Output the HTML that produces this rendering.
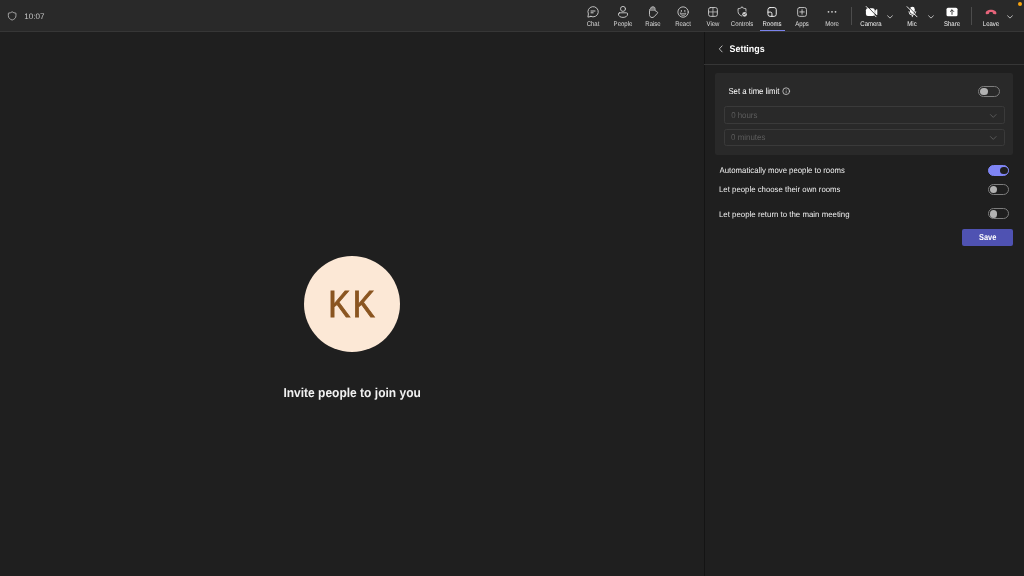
<!DOCTYPE html>
<html lang="en">
<head>
<meta charset="utf-8">
<title>Meeting</title>
<style>
*{box-sizing:border-box;margin:0;padding:0}
html,body{width:1024px;height:576px;overflow:hidden;background:#1f1f1f}
body{text-rendering:geometricPrecision;position:relative;font-family:"Liberation Sans",sans-serif;color:#fff}
.abs{position:absolute}
.t,.tb .l{will-change:opacity}
.t{position:absolute;white-space:nowrap;transform-origin:0 50%;line-height:1}
#hdr{position:absolute;left:0;top:0;width:1024px;height:32px;background:#292929;border-bottom:1px solid #363636}
.tb{position:absolute;top:0;height:31px;width:30px}
.tb svg{position:absolute;left:50%;top:6px;width:12px;height:12px;margin-left:-6px;overflow:visible}
.tb .l{position:absolute;left:-10px;right:-10px;top:20.6px;text-align:center;font-size:6.8px;line-height:8px;color:#dcdcdc;white-space:nowrap;transform:scaleX(.885)}
.tb.w .l{color:#f2f2f2}
.vdiv{position:absolute;top:7.4px;width:1px;height:17.3px;background:#4c4c4c}
#panel{position:absolute;left:704px;top:32px;width:320px;height:544px;background:#1f1f1f;border-left:1px solid #141414}
#phead{position:absolute;left:-1px;top:0;width:320px;height:33px;border-bottom:1px solid #363636}
#card{position:absolute;left:715px;top:73px;width:298px;height:82px;background:#292929;border-radius:2px}
.sel{position:absolute;left:724px;width:280.5px;height:17.6px;border:1px solid #3a3a3a;border-radius:2.5px;background:#292929}
.tog{position:absolute;width:21.5px;height:11px;border-radius:6px;border:1px solid #7c7c7c}
.tog i{position:absolute;left:1.3px;top:0.7px;width:7.6px;height:7.6px;border-radius:50%;background:#b2b2b2}
.tog.on{background:#7f85f5;border-color:#7f85f5}
.tog.on i{left:auto;right:0.3px;background:#1f1f1f}
#save{position:absolute;left:962px;top:229px;width:51px;height:17px;background:#4f52b2;border-radius:2px}
#avatar{position:absolute;left:304px;top:256px;width:96px;height:96px;border-radius:50%;background:#fce8d6}
</style>
</head>
<body>
<div id="hdr">
<svg class="abs" style="left:6px;top:10px;width:12px;height:12px;overflow:visible" viewBox="0 0 12 12" fill="none" stroke="#a8a8a8" stroke-width="0.95" stroke-linejoin="round"><path d="M6.15 1.8C7.2 2.6 8.5 3.1 9.95 3.2V5.7C9.95 7.9 8.6 9.2 6.15 10.05C3.7 9.2 2.35 7.9 2.35 5.7V3.2C3.8 3.1 5.1 2.6 6.15 1.8Z"/></svg>
<div class="tb " style="left:578.4px"><svg viewBox="0 0 12 12" fill="none" stroke="#cfcfcf" stroke-width="0.9" stroke-linecap="round" stroke-linejoin="round"><path d="M3.92 10.47L0.9 11.1L1.43 7.98A5.15 5.15 0 1 1 3.92 10.47Z"/><path d="M4 5h4M4 6.8h2.2" stroke-width="1"/></svg><span class="l">Chat</span></div>
<div class="tb " style="left:608.1px"><svg viewBox="0 0 12 12" fill="none" stroke="#cfcfcf" stroke-width="0.9" stroke-linecap="round" stroke-linejoin="round"><circle cx="6" cy="2.9" r="2.5"/><path d="M2.6 6.8h6.8a1.2 1.2 0 0 1 1.2 1.2c0 2.2-2 3.4-4.6 3.4S1.4 10.2 1.4 8a1.2 1.2 0 0 1 1.2-1.2z"/></svg><span class="l">People</span></div>
<div class="tb " style="left:638.4px"><svg viewBox="0 0 12 12" fill="none" stroke="#cfcfcf" stroke-width="0.9" stroke-linecap="round" stroke-linejoin="round"><g transform="translate(0.4 0)"><path d="M2.1 4.2C2.1 3.2 2.7 2.6 3.4 2.5V2.3C3.4 1.3 4.3 0.8 5.5 0.8C6.8 0.8 7.6 1.5 7.6 2.6V4.6L9.5 5.6C10.3 6 10.4 6.7 9.9 7.3L6.9 10.6C6.2 11.3 5.4 11.5 4.6 11.5C3.1 11.5 2.1 10.4 2.1 8.8Z"/><path d="M2.3 4.3C2.3 3.3 2.9 2.8 3.5 2.7V2.4C3.5 1.5 4.4 1 5.5 1S7.4 1.6 7.4 2.6V4.9H2.3Z" fill="#cfcfcf" stroke="none" opacity="0.5"/></g></svg><span class="l">Raise</span></div>
<div class="tb " style="left:667.8px"><svg viewBox="0 0 12 12" fill="none" stroke="#cfcfcf" stroke-width="0.9" stroke-linecap="round" stroke-linejoin="round"><circle cx="6.1" cy="6.05" r="5.2"/><ellipse cx="4.35" cy="4.9" rx="0.6" ry="0.9" fill="#cfcfcf" stroke="none"/><ellipse cx="7.85" cy="4.9" rx="0.6" ry="0.9" fill="#cfcfcf" stroke="none"/><path d="M3.3 7.1Q6.1 8 8.9 7.1C8.7 8.9 7.5 9.7 6.1 9.7S3.5 8.9 3.3 7.1Z" fill="#cfcfcf" fill-opacity="0.35" stroke-width="0.7" stroke-opacity="0.75"/></svg><span class="l">React</span></div>
<div class="tb " style="left:697.7px"><svg viewBox="0 0 12 12" fill="none" stroke="#cfcfcf" stroke-width="0.9" stroke-linecap="round" stroke-linejoin="round"><rect x="1.55" y="1.55" width="8.8" height="8.8" rx="1.9"/><path d="M5.95 1.55v8.8M1.55 5.95h8.8" opacity="0.8"/></svg><span class="l">View</span></div>
<div class="tb " style="left:727.4px"><svg viewBox="0 0 12 12" fill="none" stroke="#cfcfcf" stroke-width="0.9" stroke-linecap="round" stroke-linejoin="round"><path d="M6 1.25C7.1 2.1 8.4 2.6 9.95 2.7V5.4C9.95 7.8 8.5 9.2 6 10.05C3.5 9.2 2.05 7.8 2.05 5.4V2.7C3.6 2.6 4.9 2.1 6 1.25Z"/><circle cx="8.6" cy="8.3" r="3" fill="#292929" stroke="none"/><circle cx="8.6" cy="8.3" r="2.35" fill="#cfcfcf" stroke="none"/><path d="M7.6 8.3l0.7 0.7l1.3-1.4" stroke="#292929" stroke-width="0.7"/></svg><span class="l">Controls</span></div>
<div class="tb w" style="left:757.4px"><svg viewBox="0 0 12 12" fill="none" stroke="#fff" stroke-width="0.9" stroke-linecap="round" stroke-linejoin="round"><rect x="1.95" y="1.55" width="8.3" height="8.8" rx="2.1"/><path d="M1.95 6.1h2.4a1.6 1.6 0 0 1 1.6 1.6v2.65"/></svg><span class="l">Rooms</span></div>
<div class="tb " style="left:787.3px"><svg viewBox="0 0 12 12" fill="none" stroke="#cfcfcf" stroke-width="0.9" stroke-linecap="round" stroke-linejoin="round"><rect x="1.65" y="1.55" width="8.8" height="8.8" rx="1.9"/><path d="M6.05 3.7v4.5M3.8 5.95h4.5"/></svg><span class="l">Apps</span></div>
<div class="tb " style="left:817.1px"><svg viewBox="0 0 12 12" fill="none" stroke="#cfcfcf" stroke-width="0.9" stroke-linecap="round" stroke-linejoin="round"><circle cx="2.5" cy="5.8" r="0.9" fill="#cfcfcf" stroke="none"/><circle cx="6" cy="5.8" r="0.9" fill="#cfcfcf" stroke="none"/><circle cx="9.5" cy="5.8" r="0.9" fill="#cfcfcf" stroke="none"/></svg><span class="l">More</span></div>
<div class="tb w" style="left:856.0px"><svg viewBox="0 0 12 12" fill="none" stroke="#fff" stroke-width="0.9" stroke-linecap="round" stroke-linejoin="round"><rect x="0.9" y="2.3" width="8.8" height="7.8" rx="2" fill="#fff" stroke="none"/><path d="M10.2 5L12 3.4V9L10.2 7.4Z" fill="#fff" stroke="#fff" stroke-width="0.6"/><path d="M1.9 -0.1L11.8 10.2" stroke="#292929" stroke-width="0.9"/><path d="M1.2 0.5L11.1 10.8" stroke="#fff" stroke-width="0.9"/></svg><span class="l">Camera</span></div>
<div class="tb w" style="left:896.5px"><svg viewBox="0 0 12 12" fill="none" stroke="#fff" stroke-width="0.9" stroke-linecap="round" stroke-linejoin="round"><rect x="4" y="0.8" width="4.7" height="7.1" rx="2.35" fill="#fff" stroke="none"/><path d="M2.9 5.7a3.45 3.45 0 0 0 6.9 0M6.35 9.2v1.5" stroke="#fff" stroke-width="0.85"/><path d="M1.8 0.1L11.7 10.2" stroke="#292929" stroke-width="0.9"/><path d="M1.1 0.7L11 10.8" stroke="#fff" stroke-width="0.9"/></svg><span class="l">Mic</span></div>
<div class="tb w" style="left:937.2px"><svg viewBox="0 0 12 12" fill="none" stroke="#fff" stroke-width="0.9" stroke-linecap="round" stroke-linejoin="round"><rect x="0.5" y="1.7" width="11" height="8.6" rx="1.5" fill="#fff" stroke="none"/><path d="M6 4v4.4M4.3 5.5L6 3.8L7.7 5.5" stroke="#292929" stroke-width="0.9"/></svg><span class="l">Share</span></div>
<div class="tb w" style="left:976.1px"><svg viewBox="0 0 12 12" fill="none" stroke="#fff" stroke-width="0.9" stroke-linecap="round" stroke-linejoin="round"><path d="M0.7 7.2C0.7 5 3.2 3.8 6 3.8S11.4 5 11.4 7.2C11.4 7.9 10.9 8.3 10.3 8.2L8.6 7.9C8 7.8 7.7 7.3 7.7 6.8V6.2C6.6 5.8 5.4 5.8 4.3 6.2V6.8C4.3 7.3 4 7.8 3.4 7.9L1.7 8.2C1.1 8.3 0.7 7.9 0.7 7.2Z" fill="#e6647a" stroke="none"/></svg><span class="l">Leave</span></div>
<svg class="abs" style="left:887.1px;top:14.5px;width:6px;height:4px;overflow:visible" viewBox="0 0 6 4" fill="none" stroke="#c0c0c0" stroke-width="0.95" stroke-linecap="round" stroke-linejoin="round"><path d="M0.6 0.8L3 3.1L5.4 0.8"/></svg>
<svg class="abs" style="left:927.6px;top:14.5px;width:6px;height:4px;overflow:visible" viewBox="0 0 6 4" fill="none" stroke="#c0c0c0" stroke-width="0.95" stroke-linecap="round" stroke-linejoin="round"><path d="M0.6 0.8L3 3.1L5.4 0.8"/></svg>
<svg class="abs" style="left:1007.1px;top:14.6px;width:6px;height:4px;overflow:visible" viewBox="0 0 6 4" fill="none" stroke="#c0c0c0" stroke-width="0.95" stroke-linecap="round" stroke-linejoin="round"><path d="M0.6 0.8L3 3.1L5.4 0.8"/></svg>
<div class="vdiv" style="left:851px"></div><div class="vdiv" style="left:971px"></div>
<div class="abs" style="left:760px;top:29.5px;width:24.5px;height:1.5px;background:#7b83eb"></div>
<div class="abs" style="left:1017.7px;top:2.2px;width:4.1px;height:4.1px;border-radius:50%;background:#f9a30e"></div>
</div>
<div id="panel"><div id="phead"></div></div>
<div id="card"></div>
<div class="sel" style="top:106.1px"></div>
<div class="sel" style="top:128.8px"></div>
<div class="tog" style="left:978.2px;top:86.1px"><i></i></div>
<div class="tog on" style="left:987.5px;top:165px"><i></i></div>
<div class="tog" style="left:987.5px;top:184px"><i></i></div>
<div class="tog" style="left:987.5px;top:208.3px"><i></i></div>
<svg class="abs" style="left:717px;top:44px;width:8px;height:10px;overflow:visible" viewBox="0 0 8 10" fill="none" stroke="#c8c8c8" stroke-width="0.9" stroke-linecap="round" stroke-linejoin="round"><path d="M5.1 1.9L2.3 4.9L5.1 7.9"/></svg>
<svg class="abs" style="left:782px;top:87px;width:8.4px;height:8.4px;overflow:visible" viewBox="0 0 8.4 8.4" fill="none" stroke="#d0d0d0" stroke-width="0.8" stroke-linecap="round"><circle cx="4.2" cy="4.2" r="3.4"/><path d="M4.2 3.9v2" stroke-width="0.7" opacity="0.85"/><circle cx="4.2" cy="2.6" r="0.42" fill="#d0d0d0" stroke="none" opacity="0.85"/></svg>
<svg class="abs" style="left:990px;top:113.6px;width:6.5px;height:4px;overflow:visible" viewBox="0 0 6.5 4" fill="none" stroke="#5e5e5e" stroke-width="0.9" stroke-linecap="round" stroke-linejoin="round"><path d="M0.45 0.6L3.25 3.4L6.05 0.6"/></svg>
<svg class="abs" style="left:990px;top:136.2px;width:6.5px;height:4px;overflow:visible" viewBox="0 0 6.5 4" fill="none" stroke="#5e5e5e" stroke-width="0.9" stroke-linecap="round" stroke-linejoin="round"><path d="M0.45 0.6L3.25 3.4L6.05 0.6"/></svg>
<div id="save"></div>
<div id="avatar"></div>

<div class="t" id="tSettings" style="left:730.00px;top:45.00px;font-size:9.70px;font-weight:bold;transform:translate(-0.45px,0.20px) scaleX(0.9177)">Settings</div>
<div class="t" id="tLimit" style="left:729.00px;top:88.00px;font-size:8.62px;transform:translate(-0.59px,-1.10px) scaleX(0.9036)">Set a time limit</div>
<div class="t" id="tHours" style="left:731.00px;top:112.00px;font-size:8.45px;color:#5c5c5c;transform:translate(0.13px,-1.20px) scaleX(0.9351)">0 hours</div>
<div class="t" id="tMin" style="left:732.00px;top:134.00px;font-size:8.45px;color:#5c5c5c;transform:translate(-0.89px,-0.70px) scaleX(0.9353)">0 minutes</div>
<div class="t" id="tAuto" style="left:720.00px;top:167.00px;font-size:8.25px;color:#f0f0f0;transform:translate(-0.39px,-0.20px) scaleX(0.9415)">Automatically move people to rooms</div>
<div class="t" id="tChoose" style="left:719.00px;top:186.00px;font-size:8.14px;color:#f0f0f0;transform:translate(0.03px,0.10px) scaleX(0.9607)">Let people choose their own rooms</div>
<div class="t" id="tReturn" style="left:719.00px;top:211.00px;font-size:8.14px;color:#f0f0f0;transform:translate(-0.01px,-0.25px) scaleX(0.9671)">Let people return to the main meeting</div>
<div class="t" id="tSave" style="left:979.00px;top:234.00px;font-size:8.64px;font-weight:bold;transform:translate(-0.01px,-0.95px) scaleX(0.8617)">Save</div>
<div class="t" id="tKK" style="left:328.00px;top:286.00px;font-size:37.92px;color:#8a5520;-webkit-text-stroke:0.9px #8a5520;letter-spacing:2.6px;transform:translate(0.30px,0.92px) scaleX(0.8736)">KK</div>
<div class="t" id="tInvite" style="left:283.00px;top:387.00px;font-size:12.89px;font-weight:bold;color:#f0f0f0;transform:translate(0.38px,0.25px) scaleX(0.9328)">Invite people to join you</div>
<div class="t" id="tTime" style="left:24.00px;top:12.00px;font-size:8.06px;color:#c6c6c6;transform:translate(0.34px,0.70px) scaleX(0.9983)">10:07</div>
</body>
</html>
